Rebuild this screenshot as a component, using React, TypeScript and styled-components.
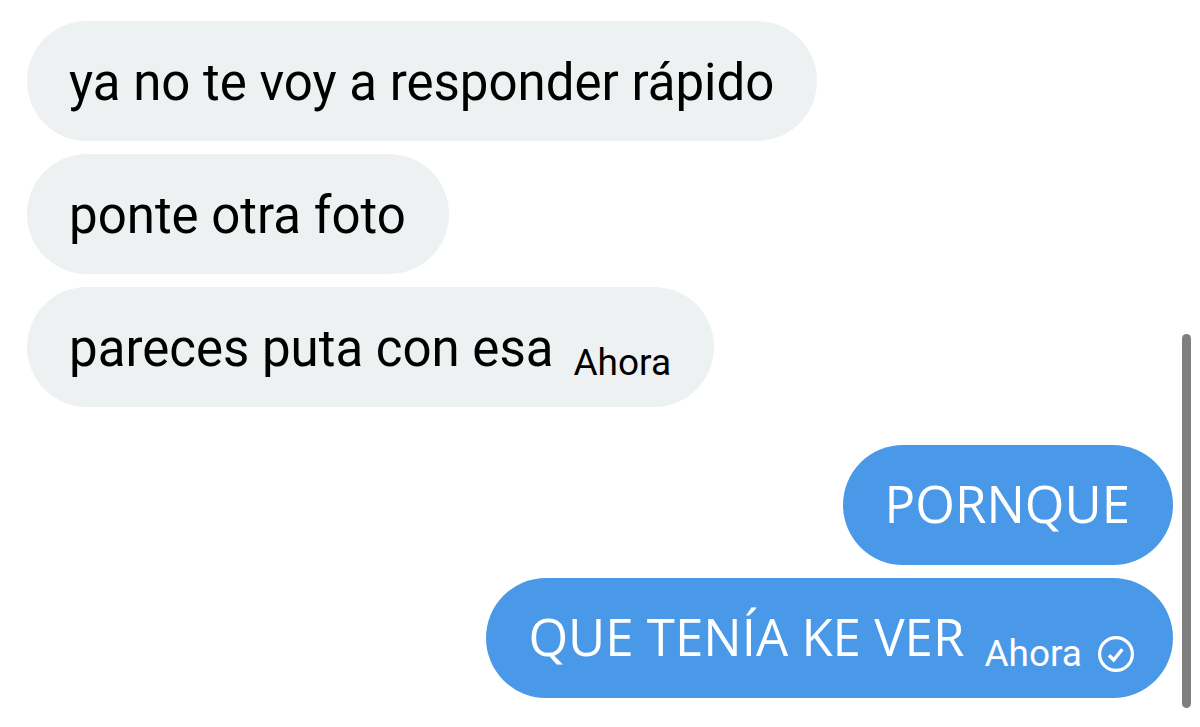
import React from "react";
import styled, { createGlobalStyle } from "styled-components";

const GlobalStyle = createGlobalStyle`
  body {
    margin: 0;
    background: #ffffff;
    font-family: Roboto, "Open Sans", sans-serif;
  }
`;

const Conversation = styled.main`
  display: flex;
  flex-direction: column;
  gap: 38px;
  padding: 21px 27px 29px;
`;

const MessageGroup = styled.ul<{ $own?: boolean }>`
  display: flex;
  flex-direction: column;
  align-items: ${(p) => (p.$own ? "flex-end" : "flex-start")};
  gap: 13px;
  margin: 0;
  padding: 0;
  list-style: none;
`;

const Text = styled.span`
  font-size: 51px;
  line-height: 68px;
`;

const Bubble = styled.li<{ $own?: boolean; $receipt?: boolean }>`
  display: flex;
  align-items: flex-end;
  box-sizing: border-box;
  min-height: 120px;
  padding: 20px ${(p) => (p.$receipt ? "39px" : "43px")} 24px 42px;
  border-radius: 60px;
  background: ${(p) => (p.$own ? "#4a99e9" : "#edf1f2")};
  color: ${(p) => (p.$own ? "#ffffff" : "#000000")};

  ${Text} {
    font-family: ${(p) => (p.$own ? '"Open Sans", sans-serif' : "inherit")};
    line-height: ${(p) => (p.$own ? "76px" : "68px")};
  }
`;

const Meta = styled.span`
  display: flex;
  align-items: center;
  gap: 16px;
  margin-left: 20px;
`;

const Time = styled.time`
  font-size: 37px;
  line-height: 40px;
`;

const SentIcon = styled.svg`
  display: block;
  width: 36px;
  height: 36px;
`;

const ScrollThumb = styled.div`
  position: fixed;
  top: 334px;
  right: 9px;
  bottom: 19px;
  width: 9px;
  border-radius: 5px;
  background: #7f7f7f;
`;

function Sent() {
  return (
    <SentIcon viewBox="0 0 36 36" fill="none" stroke="currentColor" role="img" aria-label="Enviado">
      <circle cx="18" cy="18" r="16.4" strokeWidth="3.2" />
      <path d="M11 19.3 15.7 24 24.3 13.2" strokeWidth="3.4" />
    </SentIcon>
  );
}

export default function App() {
  return (
    <>
      <GlobalStyle />
      <Conversation>
        <MessageGroup>
          <Bubble><Text>ya no te voy a responder rápido</Text></Bubble>
          <Bubble><Text>ponte otra foto</Text></Bubble>
          <Bubble>
            <Text>pareces puta con esa</Text>
            <Meta><Time>Ahora</Time></Meta>
          </Bubble>
        </MessageGroup>
        <MessageGroup $own>
          <Bubble $own><Text>PORNQUE</Text></Bubble>
          <Bubble $own $receipt>
            <Text>QUE TENÍA KE VER</Text>
            <Meta><Time>Ahora</Time><Sent /></Meta>
          </Bubble>
        </MessageGroup>
      </Conversation>
      <ScrollThumb />
    </>
  );
}
